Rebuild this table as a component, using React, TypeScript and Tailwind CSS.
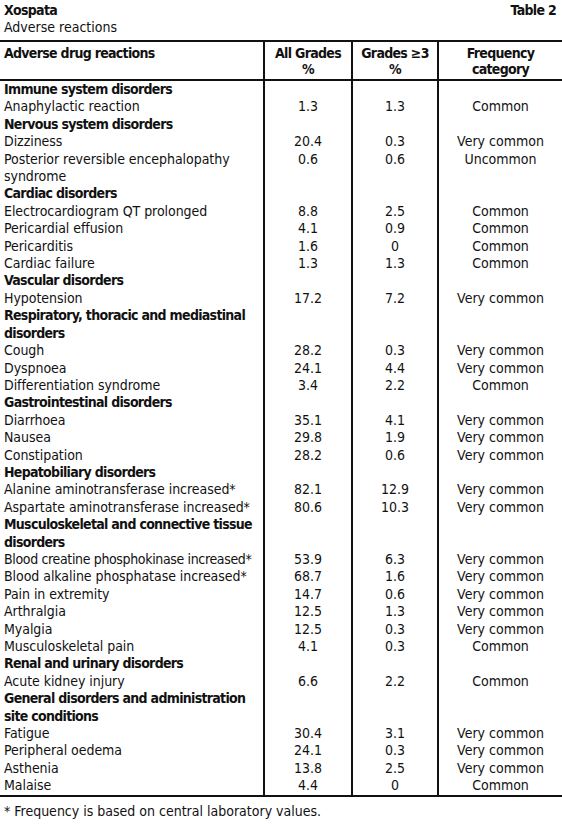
import React from "react";

type Row =
  | { kind: "cat"; lines: string[] }
  | { kind: "item"; lines: string[]; all: string; g3: string; freq: string; tight?: boolean };

const rows: Row[] = [
  { kind: "cat", lines: ["Immune system disorders"] },
  { kind: "item", lines: ["Anaphylactic reaction"], all: "1.3", g3: "1.3", freq: "Common" },
  { kind: "cat", lines: ["Nervous system disorders"] },
  { kind: "item", lines: ["Dizziness"], all: "20.4", g3: "0.3", freq: "Very common" },
  { kind: "item", lines: ["Posterior reversible encephalopathy", "syndrome"], all: "0.6", g3: "0.6", freq: "Uncommon" },
  { kind: "cat", lines: ["Cardiac disorders"] },
  { kind: "item", lines: ["Electrocardiogram QT prolonged"], all: "8.8", g3: "2.5", freq: "Common" },
  { kind: "item", lines: ["Pericardial effusion"], all: "4.1", g3: "0.9", freq: "Common" },
  { kind: "item", lines: ["Pericarditis"], all: "1.6", g3: "0", freq: "Common" },
  { kind: "item", lines: ["Cardiac failure"], all: "1.3", g3: "1.3", freq: "Common" },
  { kind: "cat", lines: ["Vascular disorders"] },
  { kind: "item", lines: ["Hypotension"], all: "17.2", g3: "7.2", freq: "Very common" },
  { kind: "cat", lines: ["Respiratory, thoracic and mediastinal", "disorders"] },
  { kind: "item", lines: ["Cough"], all: "28.2", g3: "0.3", freq: "Very common" },
  { kind: "item", lines: ["Dyspnoea"], all: "24.1", g3: "4.4", freq: "Very common" },
  { kind: "item", lines: ["Differentiation syndrome"], all: "3.4", g3: "2.2", freq: "Common" },
  { kind: "cat", lines: ["Gastrointestinal disorders"] },
  { kind: "item", lines: ["Diarrhoea"], all: "35.1", g3: "4.1", freq: "Very common" },
  { kind: "item", lines: ["Nausea"], all: "29.8", g3: "1.9", freq: "Very common" },
  { kind: "item", lines: ["Constipation"], all: "28.2", g3: "0.6", freq: "Very common" },
  { kind: "cat", lines: ["Hepatobiliary disorders"] },
  { kind: "item", lines: ["Alanine aminotransferase increased*"], all: "82.1", g3: "12.9", freq: "Very common" },
  { kind: "item", lines: ["Aspartate aminotransferase increased*"], all: "80.6", g3: "10.3", freq: "Very common" },
  { kind: "cat", lines: ["Musculoskeletal and connective tissue", "disorders"] },
  { kind: "item", lines: ["Blood creatine phosphokinase increased*"], all: "53.9", g3: "6.3", freq: "Very common", tight: true },
  { kind: "item", lines: ["Blood alkaline phosphatase increased*"], all: "68.7", g3: "1.6", freq: "Very common" },
  { kind: "item", lines: ["Pain in extremity"], all: "14.7", g3: "0.6", freq: "Very common" },
  { kind: "item", lines: ["Arthralgia"], all: "12.5", g3: "1.3", freq: "Very common" },
  { kind: "item", lines: ["Myalgia"], all: "12.5", g3: "0.3", freq: "Very common" },
  { kind: "item", lines: ["Musculoskeletal pain"], all: "4.1", g3: "0.3", freq: "Common" },
  { kind: "cat", lines: ["Renal and urinary disorders"] },
  { kind: "item", lines: ["Acute kidney injury"], all: "6.6", g3: "2.2", freq: "Common" },
  { kind: "cat", lines: ["General disorders and administration", "site conditions"] },
  { kind: "item", lines: ["Fatigue"], all: "30.4", g3: "3.1", freq: "Very common" },
  { kind: "item", lines: ["Peripheral oedema"], all: "24.1", g3: "0.3", freq: "Very common" },
  { kind: "item", lines: ["Asthenia"], all: "13.8", g3: "2.5", freq: "Very common" },
  { kind: "item", lines: ["Malaise"], all: "4.4", g3: "0", freq: "Common" },
];

const font = {
  fontFamily: "'Liberation Sans Narrow', 'DejaVu Sans Condensed', 'Arial Narrow', sans-serif",
};

const cols = "grid grid-cols-[263px_88px_86px_125px]";
const bold = "font-bold tracking-[-0.7px]";

export default function App() {
  return (
    <div className="w-[562px] h-[824px] bg-white text-[#111] text-[14px] leading-[17.4px]" style={font}>
      <div className="px-[4px] pt-[2px] h-[40px]">
        <div className={`flex justify-between ${bold}`}>
          <span>Xospata</span>
          <span className="pr-[2px]">Table 2</span>
        </div>
        <div>Adverse reactions</div>
      </div>
      <div className="border-t-2 border-b-2 border-[#111]">
        <div className={`${cols} h-[39px] border-b-2 border-[#111] ${bold} leading-[16px]`}>
          <div className="pl-[4px] pt-[3px]">Adverse drug reactions</div>
          <div className="text-center pt-[3px] border-l-2 border-[#111]">
            All Grades<br />%
          </div>
          <div className="text-center pt-[3px] border-l-2 border-[#111]">
            Grades ≥3<br />%
          </div>
          <div className="text-center pt-[3px] border-l-2 border-[#111]">
            Frequency<br />category
          </div>
        </div>
        {rows.map((r, i) => (
          <div key={i} className={cols}>
            <div
              className={`pl-[4px] whitespace-nowrap ${
                r.kind === "cat" ? bold : r.tight ? "tracking-[-0.35px]" : "tracking-[-0.05px]"
              }`}
            >
              {r.lines.map((l, j) => (
                <div key={j}>{l}</div>
              ))}
            </div>
            <div className="border-l-2 border-[#111] text-center">
              {r.kind === "item" ? r.all : ""}
            </div>
            <div className="border-l-2 border-[#111] text-center">
              {r.kind === "item" ? r.g3 : ""}
            </div>
            <div className="border-l-2 border-[#111] text-center">
              {r.kind === "item" ? r.freq : ""}
            </div>
          </div>
        ))}
      </div>
      <div className="pl-[4px] pt-[6px]">* Frequency is based on central laboratory values.</div>
    </div>
  );
}
